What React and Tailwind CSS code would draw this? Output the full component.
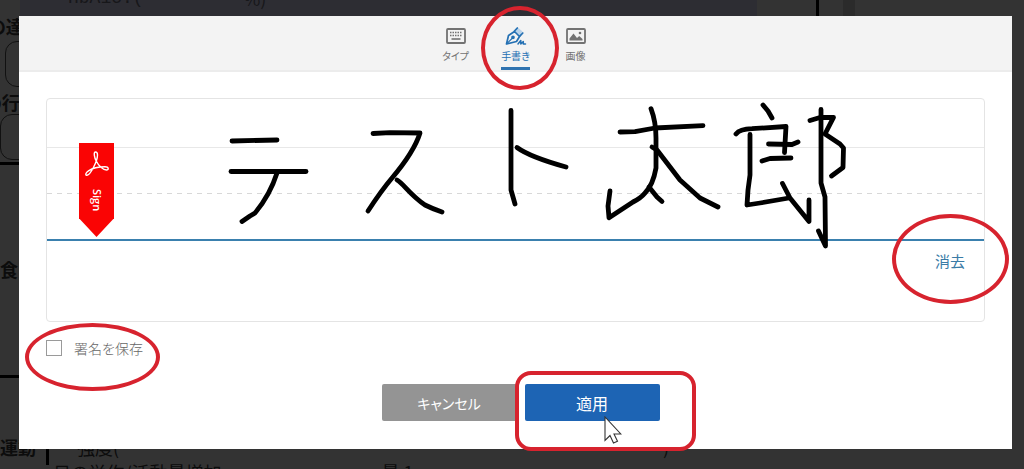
import React, { useState } from 'react'

const strokes = [
  // テ
  'M232 141L277 140',
  'M231 171.5H306',
  'M277 173Q270 195 255 213L250 216L242 221.5',
  // ス
  'M373 133.5L390 132.7L420 133Q414 152 392 178Q381 191 368 211',
  'M397 180C404 184 409 194 425 205Q433 209 442 212',
  // ト
  'M511 110.5V190L515 204',
  'M517 147.5Q530 157 566 167',
  // 太
  'M620 132L635 131.7L655 128L703 125.7',
  'M651 108.7Q656 122 656 138V168Q653 185 645 193Q641 198 633 202L609 217.7L608 206L610 191',
  'M652 147L657 150L680 180L700 198L718 207',
  'M649 187L657 197L662 201.5',
  // 郎
  'M763 105L768 111L772 118',
  'M736 134Q740 129 752 128.7L786 126.5L784.5 152.5',
  'M750 134.5V175L748 190L747 205L760 203L789 198',
  'M768.5 144L792 144.5L798 142',
  'M762 161L770 158.5L791 158',
  'M782.5 183.5L790 198L809 221.5V200',
  'M821 109.5V183L825 197L825.5 246L818.5 231',
  'M810 120.5L820 117.5L833.5 117.3L825 134L840 144L843.5 148L843 167.5L831.5 176',
]

const KeyboardIcon = () => (
  <svg width="20" height="20" viewBox="0 0 20 20" fill="none" stroke="currentColor">
    <rect x="1" y="3" width="18" height="14" rx="1" strokeWidth="1.8" />
    <path d="M4 6.5h12M4 9.5h12" strokeWidth="1.4" strokeDasharray="1.5 1" />
    <path d="M5.500 13h9" strokeWidth="1.6" />
  </svg>
)

const PenIcon = () => (
  <svg width="22" height="20" viewBox="0 0 22 20" fill="none" stroke="currentColor" strokeWidth="1.7" strokeLinejoin="round" strokeLinecap="round">
    <path d="M9.500 5L12.500 1.200L17.500 5.500L14.800 10.200" fill="#b9d3ea" stroke="none" />
    <path d="M1.500 18L3.500 9.500L9.500 5.500L14.500 10.500L11.500 15.500L1.500 18Z" />
    <path d="M9.500 5L12.300 2M14.800 10.200L17.800 7" />
    <path d="M2 17.500L7.500 12" strokeWidth="1.2" />
    <circle cx="8" cy="11.3" r="1" fill="currentColor" />
    <path d="M13 18L15.800 14.500V18L18.300 15.500V18H20.500" strokeWidth="1.5" />
  </svg>
)

const ImageIcon = () => (
  <svg width="20" height="20" viewBox="0 0 20 20" fill="none" stroke="currentColor">
    <rect x="1" y="3" width="18" height="14" rx="1" strokeWidth="1.8" />
    <path d="M3.500 14.500V12.500L7.500 7.500L11 12L13.200 10L16.500 13V14.500Z" fill="currentColor" stroke="none" />
    <circle cx="14" cy="7" r="1.3" fill="currentColor" stroke="none" />
  </svg>
)

const tabs = [
  { id: 'type', label: 'タイプ', Icon: KeyboardIcon },
  { id: 'draw', label: '手書き', Icon: PenIcon },
  { id: 'image', label: '画像', Icon: ImageIcon },
]

// Dimmed form that shows around the dialog
const Backdrop = () => (
  <div aria-hidden="true" className="absolute inset-0 flex flex-col overflow-hidden whitespace-nowrap text-lg leading-5 text-[#0c0c0c]">
    <div className="flex h-4 shrink-0 pl-5">
      <div className="flex w-[737px] items-end gap-[100px] bg-[#2d2d33] pb-2 pl-12 text-[#17171a]">
        <span className="font-['Liberation_Mono',monospace]">HbA1c:(</span>
        <span>%)</span>
      </div>
      <div className="ml-[59px] w-[3px] bg-black" />
      <div className="ml-6 w-3 bg-[#2b2b2b]" />
    </div>

    <div className="flex w-9 flex-1 flex-col font-bold">
      <span className="-ml-3">の達</span>
      <div className="mt-[5px] ml-[5px] h-[46px] rounded-xl border border-[#111111]" />
      <span className="mt-[5px] -ml-4">の行</span>
      <div className="mt-0.5 h-[46px] rounded-xl border border-[#111111]" />
      <div className="mt-0.5 h-[3px] shrink-0 bg-black" />
      <span className="mt-[94px]">食</span>
      <div className="mt-24 h-[3px] shrink-0 bg-black" />
    </div>

    <div className="flex h-8 shrink-0 items-start">
      <span className="w-[46px] font-bold">運動</span>
      <div className="mt-3 h-4 w-[3px] bg-black" />
      <div className="flex flex-col gap-[5px]">
        <div className="flex justify-between pl-7">
          <span>強度(</span>
          <span>)</span>
        </div>
        <div className="flex w-[620px] gap-40 pl-1">
          <span>日の労作/活動量増加</span>
          <span>量 1</span>
        </div>
      </div>
    </div>
  </div>
)

const SignRibbon = () => (
  <div className="absolute left-8 top-11 flex h-[94px] w-[35px] flex-col items-center bg-[#fa0404] pt-2 text-white [clip-path:polygon(0_0,100%_0,100%_80%,50%_100%,0_80%)]">
    <svg width="26" height="26" viewBox="0 0 26 26" fill="none" stroke="currentColor" strokeWidth="1.4" strokeLinejoin="round">
      <path d="M11.5 1C9.5 1 10 6 12.5 10.5C14.5 14.500 19 19 22.500 19C25 19 25 15.800 21 15.800C14 15.800 8 17.500 4.500 19.800C1.200 22 1.200 24.500 3 24.300C6.500 24 13.500 10 13.500 4C13.500 2 12.800 1 11.500 1Z" />
    </svg>
    <span className="mt-3 font-['Open_Sans',sans-serif] text-[11px] font-semibold leading-4 [writing-mode:vertical-rl]">Sign</span>
  </div>
)

const Cursor = () => (
  <svg aria-hidden="true" className="pointer-events-none absolute left-[79px] top-8" width="18" height="28" viewBox="0 0 18 28">
    <path d="M1 1V24.500L6 19.500L9.500 27L13.500 25.300L10 18H16.800Z" fill="white" stroke="#333" strokeWidth="1.100" />
  </svg>
)

const App = () => {
  const [active, setActive] = useState('draw')
  const [save, setSave] = useState(false)
  const [drawn, setDrawn] = useState(strokes)

  return (
    <div className="relative min-h-screen overflow-hidden bg-[#333333] pt-4 pb-5 pl-[19px] pr-3 font-['Noto_Sans_CJK_JP',sans-serif] [font-feature-settings:'palt']">
      <Backdrop />

      <main role="dialog" aria-label="署名" className="relative bg-white pb-7">
        {/* Tabs */}
        <div role="tablist" className="flex h-14 justify-center border-b-2 border-[#ececec] bg-[#f3f3f3]">
          {tabs.map(({ id, label, Icon }) => (
            <div key={id} className="relative flex w-[60px] justify-center">
              <button
                type="button"
                role="tab"
                aria-selected={active === id}
                onClick={() => setActive(id)}
                className={`flex flex-col items-center border-b-[3px] pt-2.5 ${
                  active === id ? 'border-[#2f73b0] text-[#2470b3]' : 'border-transparent text-[#727272]'
                }`}
              >
                <Icon />
                <span className="text-[10px] leading-5">{label}</span>
              </button>
              {id === 'draw' && (
                <span className="pointer-events-none absolute left-[-5px] top-[-10px] z-10 h-[84px] w-[78px] rounded-[50%] border-4 border-[#d7232e]" />
              )}
            </div>
          ))}
        </div>

        {/* Signature pad */}
        <div className="mx-[27px] mt-[26px]">
          <div className="relative rounded border border-[#e4e4e4]">
            <div className="h-[49px] border-b border-[#e8e8e8]" />
            <div className="h-[45px]" />
            <div className="h-px bg-[repeating-linear-gradient(90deg,#d8d8d8_0_5px,transparent_5px_10px)]" />
            <div className="h-[47px] border-b-2 border-[#3a80ae]" />
            <div className="flex h-20 items-start justify-end pr-[19px] pt-2.5">
              <div className="relative">
                <button type="button" onClick={() => setDrawn([])} className="block text-[15px] leading-5 text-[#3a7ba6]">
                  消去
                </button>
                <span className="pointer-events-none absolute left-[-43px] top-[-37px] h-[90px] w-[117px] rounded-[50%] border-4 border-[#d7232e]" />
              </div>
            </div>
            <SignRibbon />
            <svg
              aria-label="テスト太郎"
              className="pointer-events-none absolute left-[174px] top-0"
              width="640"
              height="160"
              viewBox="221 99 640 160"
              fill="none"
              stroke="black"
              strokeWidth="4.800"
              strokeLinecap="round"
              strokeLinejoin="round"
            >
              {drawn.map((d) => (
                <path key={d} d={d} />
              ))}
            </svg>
          </div>

          {/* Save signature */}
          <div className="relative mt-4 flex">
            <label className="flex items-center gap-3 text-sm font-light leading-5 text-[#666666]">
              <input
                type="checkbox"
                checked={save}
                onChange={(e) => setSave(e.target.checked)}
                className="size-4 appearance-none border border-[#9a9a9a] bg-white checked:bg-[#1d64b4]"
              />
              署名を保存
            </label>
            <span className="pointer-events-none absolute left-[-21px] top-[-15px] h-[68px] w-[135px] rounded-[50%] border-4 border-[#d7232e]" />
          </div>
        </div>

        {/* Actions */}
        <div className="mt-[26px] flex justify-center gap-2 pl-2.5">
          <button type="button" className="h-[37px] w-[135px] rounded-xs bg-[#949494] text-sm text-white">
            キャンセル
          </button>
          <div className="relative">
            <button type="button" className="block h-[37px] w-[135px] rounded-xs bg-[#1d64b4] text-base text-white">
              適用
            </button>
            <span className="pointer-events-none absolute left-[-10px] top-[-13px] h-20 w-[181px] rounded-2xl border-4 border-[#d7232e]" />
            <Cursor />
          </div>
        </div>
      </main>
    </div>
  )
}

export default App
